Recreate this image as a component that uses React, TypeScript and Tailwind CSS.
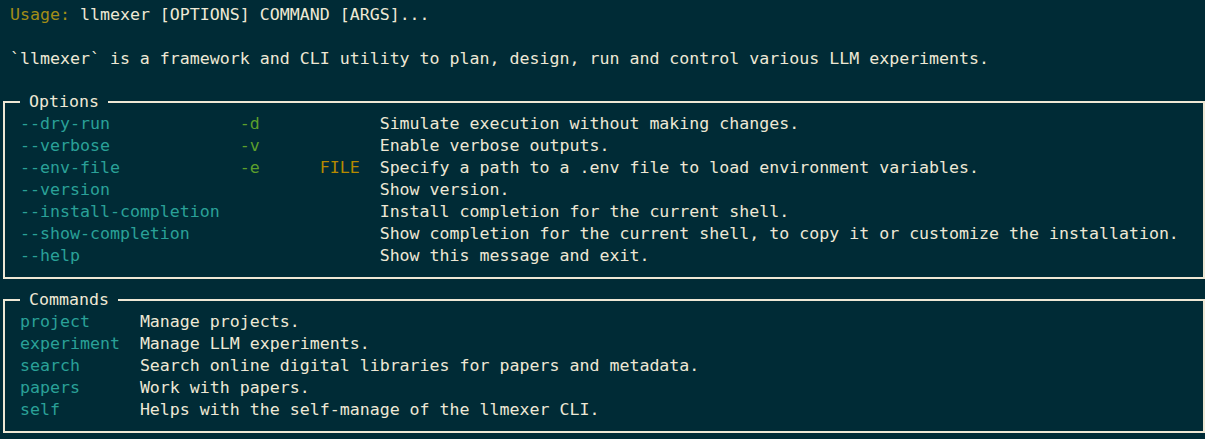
import React from 'react';

interface OptionRow {
  long: string;
  short: string;
  meta: string;
  help: string;
}

interface CommandRow {
  name: string;
  help: string;
}

const options: OptionRow[] = [
  { long: '--dry-run', short: '-d', meta: '', help: 'Simulate execution without making changes.' },
  { long: '--verbose', short: '-v', meta: '', help: 'Enable verbose outputs.' },
  { long: '--env-file', short: '-e', meta: 'FILE', help: 'Specify a path to a .env file to load environment variables.' },
  { long: '--version', short: '', meta: '', help: 'Show version.' },
  { long: '--install-completion', short: '', meta: '', help: 'Install completion for the current shell.' },
  {
    long: '--show-completion',
    short: '',
    meta: '',
    help: 'Show completion for the current shell, to copy it or customize the installation.',
  },
  { long: '--help', short: '', meta: '', help: 'Show this message and exit.' },
];

const commands: CommandRow[] = [
  { name: 'project', help: 'Manage projects.' },
  { name: 'experiment', help: 'Manage LLM experiments.' },
  { name: 'search', help: 'Search online digital libraries for papers and metadata.' },
  { name: 'papers', help: 'Work with papers.' },
  { name: 'self', help: 'Helps with the self-manage of the llmexer CLI.' },
];

const Panel = ({ title, children, className = '' }: { title: string; children: React.ReactNode; className?: string }) => (
  <fieldset className={`ml-[3px] w-[1202px] border-2 border-[#eee8d5] pl-[15px] pb-[10px] ${className}`}>
    <legend className="px-[9px] leading-[22px] text-[#eee8d5]">{title}</legend>
    {children}
  </fieldset>
);

export default function App() {
  return (
    <div className="min-h-screen bg-[#002b36] pt-[4px] font-['DejaVu_Sans_Mono',monospace] text-[16.6px] leading-[22px] whitespace-pre text-[#eee8d5]">
      <div className="pl-[10px]">
        <span className="text-[#a38d17]">Usage:</span> llmexer [OPTIONS] COMMAND [ARGS]...
      </div>
      <div className="h-[22px]" />
      <div className="pl-[10px]">
        `llmexer` is a framework and CLI utility to plan, design, run and control various LLM experiments.
      </div>
      <div className="h-[21px]" />

      <Panel title="Options">
        <div className="grid grid-cols-[22ch_8ch_6ch_1fr]">
          {options.map((opt) => (
            <React.Fragment key={opt.long}>
              <span className="text-[#2aa198]">{opt.long}</span>
              <span className="text-[#5c9f2c]">{opt.short}</span>
              <span className="text-[#b58900]">{opt.meta}</span>
              <span>{opt.help}</span>
            </React.Fragment>
          ))}
        </div>
      </Panel>

      <Panel title="Commands" className="mt-[10px]">
        <div className="grid grid-cols-[12ch_1fr]">
          {commands.map((cmd) => (
            <React.Fragment key={cmd.name}>
              <span className="text-[#2aa198]">{cmd.name}</span>
              <span>{cmd.help}</span>
            </React.Fragment>
          ))}
        </div>
      </Panel>
    </div>
  );
}
